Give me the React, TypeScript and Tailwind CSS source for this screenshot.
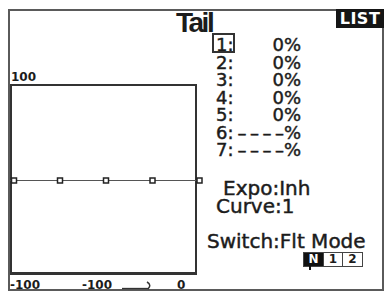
export default function App() {
  const rows: [string, string, boolean][] = [
    ["1:", "0%", false],
    ["2:", "0%", false],
    ["3:", "0%", false],
    ["4:", "0%", false],
    ["5:", "0%", false],
    ["6:", "%", true],
    ["7:", "%", true],
  ];
  const markers = [4, 50, 96, 142.5, 189.5];
  return (
    <div className="w-[387px] h-[295px] bg-white pt-[9px] pl-[8px] font-['DejaVu_Sans',sans-serif] text-[#1c1c1c]">
      <div className="relative w-[376px] h-[282px] border-2 border-[#5a5a5a] flex flex-col">
        <div className="h-[22px] pl-[166px] text-[28px] leading-[24px] font-bold tracking-[-2.5px] font-['Liberation_Sans',sans-serif]">
          Tail
        </div>
        <div className="absolute top-[-2px] right-[-2px] w-[48px] h-[19px] bg-[#151515] text-white text-[16px] font-bold leading-[19px] text-center tracking-[0.5px]">
          LIST
        </div>
        <div className="flex flex-1">
          <div className="w-[187px] flex flex-col">
            <div className="mt-[37.6px] h-[12px] text-[12px] leading-[12px] font-bold pl-[1px]">100</div>
            <div className="mt-[1.4px] relative h-[191px] border-t-2 border-l-2 border-r-2 border-b-[3px] border-[#333]">
              <svg
                className="absolute left-[-2px] top-[-2px] overflow-visible"
                width="187"
                height="191"
                viewBox="0 0 187 191"
              >
                <line x1="0" y1="96.5" x2="190" y2="96.5" stroke="#555" strokeWidth="1" />
                {markers.map((x) => (
                  <rect
                    key={x}
                    x={x - 2.5}
                    y={94}
                    width="5"
                    height="5"
                    fill="white"
                    stroke="#222"
                    strokeWidth="1.5"
                  />
                ))}
              </svg>
            </div>
            <div className="mt-[3.6px] flex items-center h-[12px] text-[12px] leading-[12px] font-bold">
              <span className="w-[72px]">-100</span>
              <span className="w-[40px]">-100</span>
              <svg width="30" height="12" viewBox="0 0 30 12" className="shrink-0">
                <path d="M0 9.5 H27" stroke="#333" strokeWidth="1.3" fill="none" />
                <path d="M25 3 Q30 6 26 10" stroke="#333" strokeWidth="1.5" fill="none" />
              </svg>
              <span className="ml-[25px]">0</span>
            </div>
          </div>
          <div className="flex-1 flex flex-col [-webkit-text-stroke:0.45px_#1c1c1c]">
            <div className="pt-[3px] flex flex-col">
              {rows.map(([l, v, dash], i) => (
                <div key={l} className="relative flex h-[17.5px] text-[18px] leading-[17.5px] pl-[19px]">
                  {i === 0 && (
                    <span className="absolute left-[15px] top-[-3px] w-[23px] h-[20px] border-2 border-[#333]" />
                  )}
                  <span className="w-[21px]">{l}</span>
                  <span className="w-[64px] text-right whitespace-nowrap">
                    {dash && (
                      <>
                        <span className="tracking-[3.5px]">–––</span>–
                      </>
                    )}
                    {v}
                  </span>
                </div>
              ))}
            </div>
            <div className="mt-[20.2px] h-[18px] text-[20px] leading-[18px] pl-[26px]">Expo:Inh</div>
            <div className="h-[18px] text-[20px] leading-[18px] pl-[19px]">Curve:1</div>
            <div className="mt-[17px] h-[18px] text-[20px] leading-[18px] pl-[10px]">Switch:Flt Mode</div>
            <div className="relative mt-[2.3px] ml-[106px] flex w-[60px] h-[15px] border-[1.5px] border-[#444] text-[12px] leading-[12px] font-bold [-webkit-text-stroke:0px]">
              <span className="w-[19px] bg-[#111] text-white flex items-center justify-center">N</span>
              <span className="w-[19px] border-l-[1.5px] border-[#444] flex items-center justify-center">1</span>
              <span className="flex-1 border-l-[1.5px] border-[#444] flex items-center justify-center">2</span>
              <span className="absolute left-[5px] top-[13px] w-[2px] h-[4px] bg-[#111]" />
            </div>
          </div>
        </div>
      </div>
    </div>
  );
}
